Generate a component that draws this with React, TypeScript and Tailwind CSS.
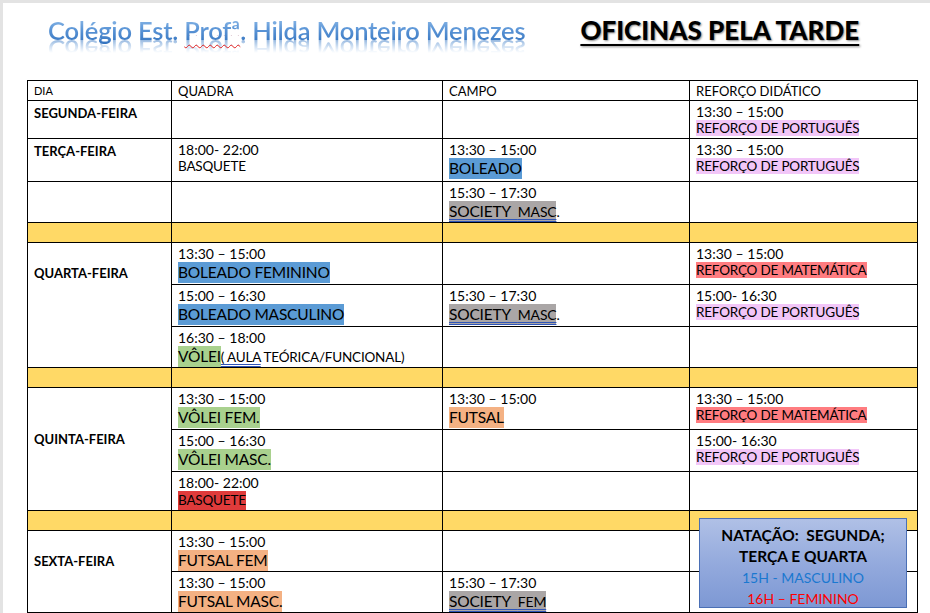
import type { ReactNode } from "react";

type Hl = "blue" | "gray" | "pink" | "salmon" | "green" | "red" | "orange";

const hlBg: Record<Hl, string> = {
  blue: "bg-[#5b9bd5]",
  gray: "bg-[#aaa6a6]",
  pink: "bg-[#f2c6f8]",
  salmon: "bg-[#ff7c80]",
  green: "bg-[#a9d18e]",
  red: "bg-[#df3b3b]",
  orange: "bg-[#f4b183]",
};

function Time({ children }: { children: ReactNode }) {
  return <div className="text-[14px] leading-[17px]">{children}</div>;
}

// big activity label (BOLEADO, VÔLEI...)
function Big({ color, children }: { color: Hl; children: ReactNode }) {
  return (
    <div className="flex">
      <span className={`${hlBg[color]} whitespace-pre text-[15.5px] leading-[21px] tracking-[-0.2px]`}>{children}</span>
    </div>
  );
}

// regular-size label (REFORÇO...)
function Small({ color, children }: { color?: Hl; children: ReactNode }) {
  return (
    <div className="flex">
      <span className={`${color ? hlBg[color] : ""} whitespace-pre text-[13.5px] leading-[16px] tracking-[-0.2px]`}>{children}</span>
    </div>
  );
}

function Society({ label }: { label: string }) {
  return (
    <div className="flex items-end">
      <span className="whitespace-pre bg-[#aaa6a6] text-[15.5px] leading-[21px] tracking-[-0.2px] underline decoration-double decoration-[#2f55b8] decoration-1 underline-offset-[2px]">
        {"SOCIETY  "}
        <span className="text-[14px]">{label}</span>
      </span>
      <span className="text-[14px] leading-[21px]">{label === "MASC" ? "." : ""}</span>
    </div>
  );
}

function Day({ children, pad = "pt-[2px]" }: { children?: ReactNode; pad?: string }) {
  return <div className={`${pad} text-[13px] font-bold leading-[17px]`}>{children}</div>;
}

function Td({ children, rowSpan }: { children?: ReactNode; rowSpan?: number }) {
  return (
    <td rowSpan={rowSpan} className="border border-black px-[6px] pt-[2px] align-top">
      {children}
    </td>
  );
}

function YellowRow() {
  return (
    <tr className="h-[20px]">
      <td className="border border-black bg-[#ffd966]" />
      <td className="border border-black bg-[#ffd966]" />
      <td className="border border-black bg-[#ffd966]" />
      <td className="border border-black bg-[#ffd966]" />
    </tr>
  );
}

export default function App() {
  return (
    <div className="h-[613px] w-[930px] overflow-hidden bg-[#e3e3e3] pl-[3px] pt-[3px] text-black [font-family:Lato,sans-serif]">
      <div className="relative h-full bg-white">
        {/* Heading */}
        <div className="flex h-[77px] items-baseline pl-[45px] pt-[12px]">
          <span className="text-[25.5px] font-semibold leading-[30px] tracking-[-0.2px] text-transparent bg-[linear-gradient(180deg,#9cc4ec_0%,#5f98d8_45%,#3070bd_100%)] bg-clip-text [-webkit-box-reflect:below_-10px_linear-gradient(transparent_40%,rgba(255,255,255,0.75))]">
            Colégio Est. <span className="underline decoration-wavy decoration-[#e02020] decoration-1 underline-offset-[4px]">Profª</span>. Hilda Monteiro Menezes
          </span>
          <span className="ml-[55px] text-[26px] font-black leading-[30px] underline decoration-2 underline-offset-[4px] [text-shadow:1px_1px_2px_rgba(0,0,0,0.45)]">
            OFICINAS PELA TARDE
          </span>
        </div>

        {/* Timetable */}
        <table className="ml-[24px] w-[890px] table-fixed border-collapse">
          <colgroup>
            <col className="w-[144px]" />
            <col className="w-[271px]" />
            <col className="w-[247px]" />
            <col className="w-[228px]" />
          </colgroup>
          <tbody>
            <tr className="h-[20px]">
              <Td><div className="text-[11px] leading-[16px]">DIA</div></Td>
              <Td><div className="text-[13px] leading-[16px]">QUADRA</div></Td>
              <Td><div className="text-[13px] leading-[16px]">CAMPO</div></Td>
              <Td><div className="text-[13px] leading-[16px]">REFORÇO DIDÁTICO</div></Td>
            </tr>

            <tr className="h-[38px]">
              <Td><Day>SEGUNDA-FEIRA</Day></Td>
              <Td />
              <Td />
              <Td>
                <Time>13:30 – 15:00</Time>
                <Small color="pink">REFORÇO DE PORTUGUÊS</Small>
              </Td>
            </tr>
            <tr className="h-[43px]">
              <Td><Day>TERÇA-FEIRA</Day></Td>
              <Td>
                <Time>18:00- 22:00</Time>
                <Small>BASQUETE</Small>
              </Td>
              <Td>
                <Time>13:30 – 15:00</Time>
                <Big color="blue">BOLEADO</Big>
              </Td>
              <Td>
                <Time>13:30 – 15:00</Time>
                <Small color="pink">REFORÇO DE PORTUGUÊS</Small>
              </Td>
            </tr>
            <tr className="h-[41px]">
              <Td />
              <Td />
              <Td>
                <Time>15:30 – 17:30</Time>
                <Society label="MASC" />
              </Td>
              <Td />
            </tr>

            <YellowRow />

            <tr className="h-[42px]">
              <Td rowSpan={3}><Day pad="pt-[20px]">QUARTA-FEIRA</Day></Td>
              <Td>
                <Time>13:30 – 15:00</Time>
                <Big color="blue">BOLEADO FEMININO</Big>
              </Td>
              <Td />
              <Td>
                <Time>13:30 – 15:00</Time>
                <Small color="salmon">REFORÇO DE MATEMÁTICA</Small>
              </Td>
            </tr>
            <tr className="h-[42px]">
              <Td>
                <Time>15:00 – 16:30</Time>
                <Big color="blue">BOLEADO MASCULINO</Big>
              </Td>
              <Td>
                <Time>15:30 – 17:30</Time>
                <Society label="MASC" />
              </Td>
              <Td>
                <Time>15:00- 16:30</Time>
                <Small color="pink">REFORÇO DE PORTUGUÊS</Small>
              </Td>
            </tr>
            <tr className="h-[41px]">
              <Td>
                <Time>16:30 – 18:00</Time>
                <div className="flex items-end">
                  <span className="bg-[#a9d18e] text-[15.5px] leading-[21px] tracking-[-0.2px]">VÔLEI</span>
                  <span className="whitespace-pre text-[13.5px] leading-[19px] tracking-[-0.2px]">
                    <span className="underline decoration-double decoration-[#2f55b8] decoration-1 underline-offset-[2px]">( AULA</span> TEÓRICA/FUNCIONAL)
                  </span>
                </div>
              </Td>
              <Td />
              <Td />
            </tr>

            <YellowRow />

            <tr className="h-[42px]">
              <Td rowSpan={3}><Day pad="pt-[41px]">QUINTA-FEIRA</Day></Td>
              <Td>
                <Time>13:30 – 15:00</Time>
                <Big color="green">VÔLEI FEM.</Big>
              </Td>
              <Td>
                <Time>13:30 – 15:00</Time>
                <Big color="orange">FUTSAL</Big>
              </Td>
              <Td>
                <Time>13:30 – 15:00</Time>
                <Small color="salmon">REFORÇO DE MATEMÁTICA</Small>
              </Td>
            </tr>
            <tr className="h-[42px]">
              <Td>
                <Time>15:00 – 16:30</Time>
                <Big color="green">VÔLEI MASC.</Big>
              </Td>
              <Td />
              <Td>
                <Time>15:00- 16:30</Time>
                <Small color="pink">REFORÇO DE PORTUGUÊS</Small>
              </Td>
            </tr>
            <tr className="h-[39px]">
              <Td>
                <Time>18:00- 22:00</Time>
                <div className="flex">
                  <span className="bg-[#df3b3b] text-[13.5px] leading-[19px] tracking-[-0.2px]">BASQUETE</span>
                </div>
              </Td>
              <Td />
              <Td />
            </tr>

            <YellowRow />

            <tr className="h-[41px]">
              <Td rowSpan={2}><Day pad="pt-[20px]">SEXTA-FEIRA</Day></Td>
              <Td>
                <Time>13:30 – 15:00</Time>
                <Big color="orange">FUTSAL FEM</Big>
              </Td>
              <Td />
              <Td />
            </tr>
            <tr className="h-[41px]">
              <Td>
                <Time>13:30 – 15:00</Time>
                <Big color="orange">FUTSAL MASC.</Big>
              </Td>
              <Td>
                <Time>15:30 – 17:30</Time>
                <Society label="FEM" />
              </Td>
              <Td />
            </tr>
          </tbody>
        </table>

        {/* floating note box */}
        <div className="absolute left-[696px] top-[515px] h-[90px] w-[208px] border border-[#4a6fb5] bg-[linear-gradient(180deg,#b0c0e6_0%,#94aadd_50%,#7d98d4_100%)] pt-[6px] text-center text-[14px] leading-[21px]">
          <div className="whitespace-pre text-[15.5px] font-bold">NATAÇÃO:  SEGUNDA;</div>
          <div className="text-[15.5px] font-bold">TERÇA E QUARTA</div>
          <div className="text-[#1a78d0]">15H - MASCULINO</div>
          <div className="text-[#ff0000]">16H – FEMININO</div>
        </div>
      </div>
    </div>
  );
}
